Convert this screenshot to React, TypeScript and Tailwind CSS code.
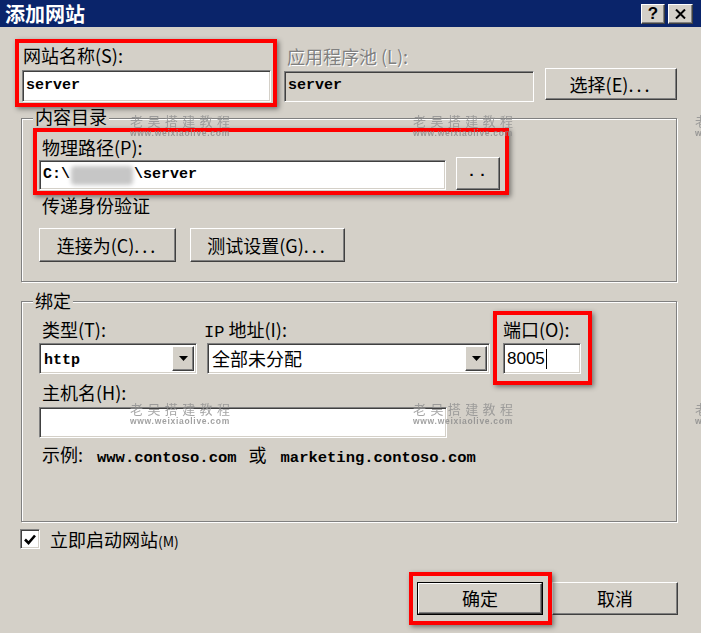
import React from "react";

const cjk = "font-['Noto_Sans_CJK_SC',sans-serif]";
const mono = "font-['Liberation_Mono','Noto_Sans_CJK_SC',monospace] text-[15px] font-bold";

function Label({ children, className = "" }: { children: React.ReactNode; className?: string }) {
  return <div className={`h-[20px] text-[18px] leading-[20px] whitespace-nowrap ${className}`}>{children}</div>;
}

function Sunken({ children, className = "" }: { children?: React.ReactNode; className?: string }) {
  return (
    <div
      className={`flex items-center border border-t-[#808080] border-l-[#808080] border-r-white border-b-white shadow-[inset_1px_1px_0_#404040,inset_-1px_-1px_0_#d4d0c8] ${className}`}
    >
      {children}
    </div>
  );
}

function Raised({ children, className = "" }: { children?: React.ReactNode; className?: string }) {
  return (
    <div
      className={`flex items-center justify-center border border-t-white border-l-white border-r-[#404040] border-b-[#404040] bg-[#d4d0c8] shadow-[inset_-1px_-1px_0_#808080] text-[18px] whitespace-nowrap ${className}`}
    >
      {children}
    </div>
  );
}

function Arrow() {
  return (
    <svg width="9" height="5" viewBox="0 0 9 5">
      <polygon points="0,0 9,0 4.5,5" fill="#000" />
    </svg>
  );
}

function Select({ children, className = "" }: { children: React.ReactNode; className?: string }) {
  return (
    <Sunken className={`bg-white p-[2px] ${className}`}>
      <div className="flex-1 pl-[2px]">{children}</div>
      <Raised className="h-full w-[22px]">
        <Arrow />
      </Raised>
    </Sunken>
  );
}

const watermarks = [
  "left-[130px] top-[114px]",
  "left-[413px] top-[114px]",
  "left-[695px] top-[114px]",
  "left-[130px] top-[402px]",
  "left-[413px] top-[402px]",
  "left-[695px] top-[402px]",
];

export default function App() {
  return (
    <div className={`relative h-[633px] w-[701px] overflow-hidden bg-[#d4d0c8] text-black ${cjk}`}>
      {/* title bar */}
      <div className="flex h-[27px] items-center justify-between bg-[#0a246a] pl-[5px] pr-[8px]">
        <span className="text-[20px] font-bold leading-none text-white">添加网站</span>
        <div className="flex gap-[3px]">
          <Raised className="h-[20px] w-[24px]">
            <span className="font-['Liberation_Sans',sans-serif] text-[17px] font-bold leading-none">?</span>
          </Raised>
          <Raised className="h-[20px] w-[25px]">
            <svg width="11" height="10" viewBox="0 0 11 10">
              <path d="M1 0.5 L10 9.5 M10 0.5 L1 9.5" stroke="#000" strokeWidth="2" />
            </svg>
          </Raised>
        </div>
      </div>

      {/* site name row */}
      <div className="mt-[18px] flex items-end pl-[22px]">
        <div className="w-[249px]">
          <Label className="ml-[1px]">网站名称(S):</Label>
          <Sunken className="mt-[5px] h-[32px] bg-white pl-[3px]">
            <span className={mono}>server</span>
          </Sunken>
        </div>
        <div className="ml-[13px] w-[250px]">
          <Label className="ml-[3px] text-[#808080] [text-shadow:1px_1px_0_#fff]">应用程序池 (L):</Label>
          <Sunken className="mt-[5px] h-[31px] pl-[3px]">
            <span className={mono}>server</span>
          </Sunken>
        </div>
        <Raised className="mb-[2px] ml-[11px] h-[32px] w-[132px]">
          选择(E)<span className="tracking-[3px]">...</span>
        </Raised>
      </div>

      {/* content directory */}
      <div className="ml-[21px] mt-[16px] h-[164px] w-[656px] border border-[#808080] shadow-[inset_1px_1px_0_#fff,1px_1px_0_#fff]">
        <Label className="-mt-[13px] ml-[11px] w-fit bg-[#d4d0c8] px-[2px]">内容目录</Label>
        <Label className="ml-[20px] mt-[11px]">物理路径(P):</Label>
        <div className="flex items-end pl-[17px]">
          <Sunken className="h-[30px] w-[407px] bg-white pl-[3px]">
            <span className={mono}>C:\</span>
            <span className="mx-[1px] inline-block h-[19px] w-[62px] rounded-[4px] bg-[#c6c6c6] blur-[2px]" />
            <span className={mono}>\server</span>
          </Sunken>
          <Raised className="ml-[10px] h-[33px] w-[44px]">
            <span className="font-['Liberation_Mono',monospace] text-[15px] font-bold tracking-[2px]">..</span>
          </Raised>
        </div>
        <Label className="ml-[20px] mt-[5px]">传递身份验证</Label>
        <div className="mt-[13px] flex gap-[14px] pl-[17px]">
          <Raised className="h-[34px] w-[137px]">
            连接为(C)<span className="tracking-[3px]">...</span>
          </Raised>
          <Raised className="h-[34px] w-[155px]">
            测试设置(G)<span className="tracking-[3px]">...</span>
          </Raised>
        </div>
      </div>

      {/* binding */}
      <div className="ml-[21px] mt-[19px] h-[221px] w-[656px] border border-[#808080] shadow-[inset_1px_1px_0_#fff,1px_1px_0_#fff]">
        <Label className="-mt-[12px] ml-[11px] w-fit bg-[#d4d0c8] px-[2px]">绑定</Label>
        <div className="mt-[9px] flex pl-[17px]">
          <div className="w-[158px]">
            <Label className="ml-[3px]">类型(T):</Label>
            <Select className="mt-[4px] h-[31px]">
              <span className={mono}>http</span>
            </Select>
          </div>
          <div className="ml-[10px] w-[283px]">
            <Label className="-ml-[3px]">
              <span className="font-['Liberation_Mono',monospace] text-[17px]">IP</span> 地址(I):
            </Label>
            <Select className="mt-[4px] h-[31px]">
              <span className="text-[18px]">全部未分配</span>
            </Select>
          </div>
          <div className="ml-[13px] w-[78px]">
            <Label>端口(O):</Label>
            <Sunken className="mt-[4px] h-[31px] bg-white pl-[3px]">
              <span className="font-['Liberation_Sans',sans-serif] text-[17px]">8005</span>
              <span className="ml-[1px] h-[20px] w-[1px] bg-black" />
            </Sunken>
          </div>
        </div>
        <Label className="ml-[20px] mt-[8px]">主机名(H):</Label>
        <Sunken className="ml-[17px] mt-[5px] h-[31px] w-[408px] bg-white" />
        <Label className="ml-[20px] mt-[6px] flex items-baseline">
          示例:
          <span className="ml-[14px] font-['Liberation_Mono',monospace] text-[15.5px] font-bold">www.contoso.com</span>
          <span className="ml-[12px] mr-[14px]">或</span>
          <span className="font-['Liberation_Mono',monospace] text-[15.5px] font-bold">marketing.contoso.com</span>
        </Label>
      </div>

      {/* start now */}
      <div className="mt-[7px] flex items-center pl-[20px]">
        <Sunken className="h-[20px] w-[20px] justify-center bg-white">
          <svg width="12" height="11" viewBox="0 0 12 11">
            <path d="M1 5.5 L4.5 9 L11 1.5" fill="none" stroke="#000" strokeWidth="2.6" />
          </svg>
        </Sunken>
        <Label className="ml-[10px]">
          立即启动网站<span className="text-[14px]">(M)</span>
        </Label>
      </div>

      {/* dialog buttons */}
      <div className="mt-[33px] flex justify-end gap-[9px] pr-[23px]">
        <div className="h-[33px] w-[126px] border border-black">
          <Raised className="h-full w-full">确定</Raised>
        </div>
        <Raised className="h-[33px] w-[126px]">取消</Raised>
      </div>

      {/* annotation boxes */}
      <div className="pointer-events-none absolute left-[15px] top-[39px] h-[68px] w-[262px] border-[4px] border-[#ff0000] shadow-[2px_2px_5px_rgba(0,0,0,0.45)]" />
      <div className="pointer-events-none absolute left-[33px] top-[128px] h-[67px] w-[476px] border-[4px] border-[#ff0000] shadow-[2px_2px_5px_rgba(0,0,0,0.45)]" />
      <div className="pointer-events-none absolute left-[493px] top-[311px] h-[74px] w-[99px] border-[4px] border-[#ff0000] shadow-[2px_2px_5px_rgba(0,0,0,0.45)]" />
      <div className="pointer-events-none absolute left-[409px] top-[572px] h-[53px] w-[143px] border-[4px] border-[#ff0000] shadow-[2px_2px_5px_rgba(0,0,0,0.45)]" />

      {/* watermarks */}
      {watermarks.map((pos) => (
        <div key={pos} className={`pointer-events-none absolute ${pos} flex w-[102px] flex-col items-start whitespace-nowrap leading-none`}>
          <span className="text-[13px] tracking-[4.4px] text-[#8f8f8f] opacity-80">老吴搭建教程</span>
          <span className="mt-[2px] font-['Liberation_Sans',sans-serif] text-[8.5px] font-bold tracking-[0.7px] text-[#8a8a8a] opacity-80">
            www.weixiaolive.com
          </span>
        </div>
      ))}
    </div>
  );
}
